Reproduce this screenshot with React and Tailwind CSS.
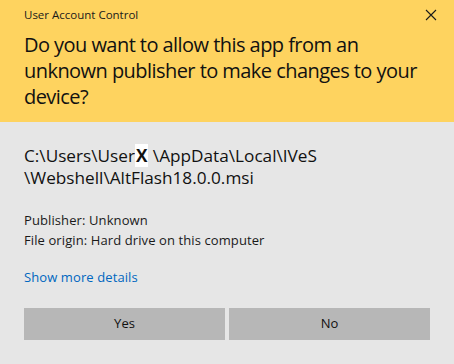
export default function App() {
  return (
    <div
      className="w-[454px] h-[364px] bg-[#e6e6e6] text-[#000] overflow-hidden"
      style={{ fontFamily: '"Open Sans", "Noto Sans", sans-serif' }}
    >
      {/* HEADER */}
      <div className="h-[122px] bg-[#fed35f] pl-6 pr-4">
        <div className="flex items-center justify-between h-[30px]">
          <span className="text-[11.5px] text-[#1a1a1a]">User Account Control</span>
          <svg width="12" height="12" viewBox="0 0 12 12" className="mr-[1px]">
            <path d="M1 1 L11 11 M11 1 L1 11" stroke="#1a1a1a" strokeWidth="1.1" />
          </svg>
        </div>
        <h1 className="mt-[2px] text-[20px] leading-[26px] tracking-[-0.55px] text-[#111]">
          Do you want to allow this app from an unknown publisher to make changes to your device?
        </h1>
      </div>

      {/* BODY */}
      <div className="px-6 pt-[23px]">
        <p className="text-[17.2px] leading-[22px] text-[#111]">
          C:\Users\User<span className="bg-white font-bold px-[1px]">X</span> \AppData\Local\IVeS
          <br />
          \Webshell\AltFlash18.0.0.msi
        </p>
        <div className="mt-[21px] text-[13px] leading-[20px] tracking-[0.1px] text-[#1a1a1a]">
          <p>Publisher: Unknown</p>
          <p>File origin: Hard drive on this computer</p>
        </div>
        <p className="mt-[17px] text-[13px] leading-[20px] tracking-[0.1px] text-[#0067c0]">Show more details</p>

        <div className="mt-[21px] flex gap-[4px]">
          <button className="w-[201px] h-[32px] bg-[#b7b7b7] text-[13px] text-[#111]">Yes</button>
          <button className="w-[201px] h-[32px] bg-[#b7b7b7] text-[13px] text-[#111]">No</button>
        </div>
      </div>
    </div>
  )
}
